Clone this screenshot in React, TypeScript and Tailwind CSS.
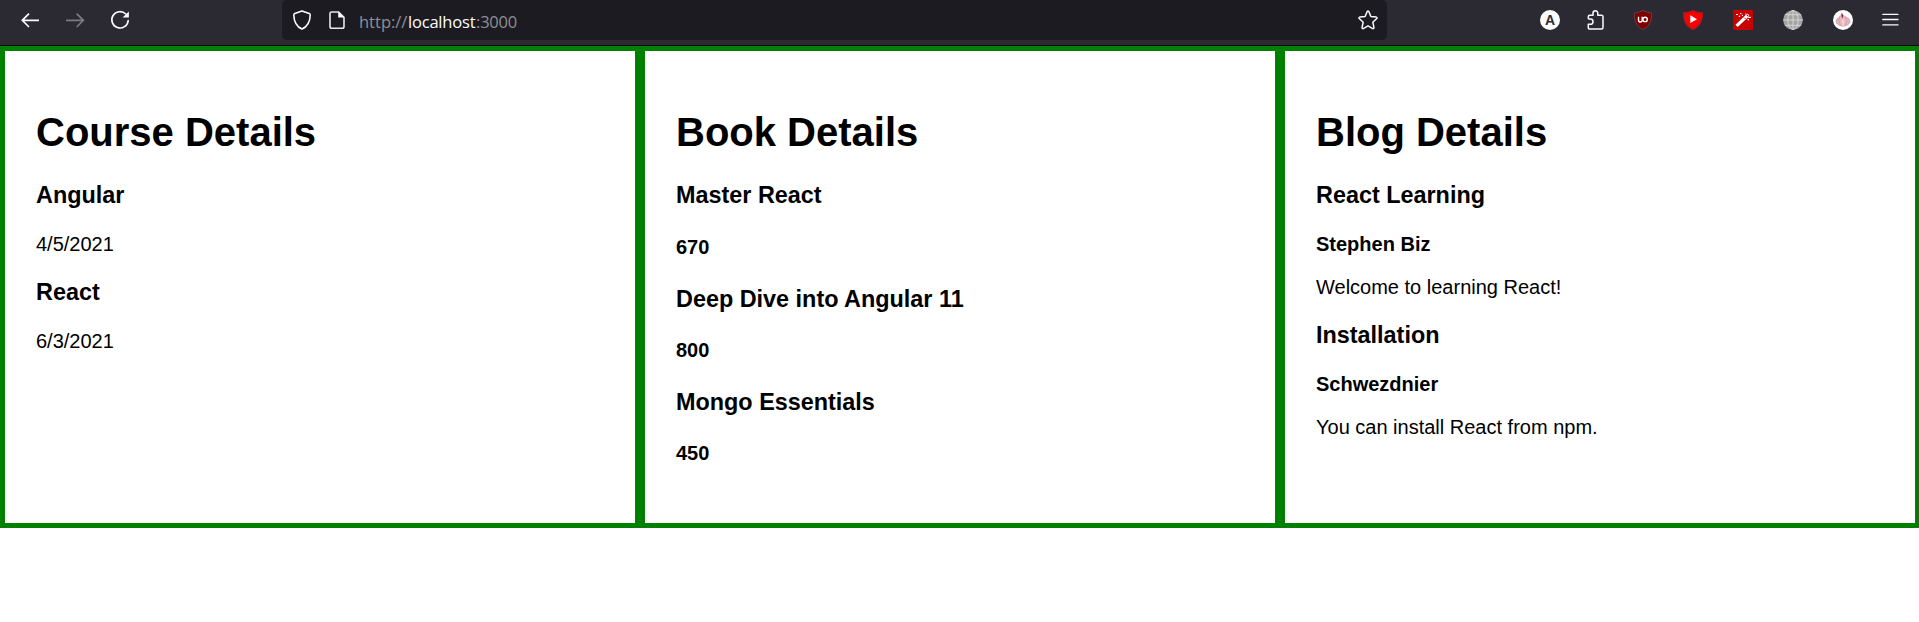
import type { ReactNode } from "react";

function Icon({ children, className = "" }: { children: ReactNode; className?: string }) {
  return (
    <svg viewBox="0 0 20 20" fill="none" className={`block h-5 w-5 shrink-0 ${className}`}>
      {children}
    </svg>
  );
}

function BackIcon() {
  return (
    <Icon>
      <path d="M9 3.6 2.3 10.3 9 17M2.3 10.3H19" stroke="#fbfbfe" strokeWidth="1.7" />
    </Icon>
  );
}

function ForwardIcon() {
  return (
    <Icon className="ml-[25px]">
      <path d="M11.7 3.6 18.4 10.3 11.7 17M18.4 10.3H1" stroke="#7c7b82" strokeWidth="1.7" />
    </Icon>
  );
}

function ReloadIcon() {
  return (
    <Icon className="ml-[25px]">
      <path d="M15.8 4A8.2 8.2 0 1 0 18.2 10.6" stroke="#fbfbfe" strokeWidth="1.6" strokeLinecap="round" />
      <path d="M18.9 1.6V7.6H12.6Z" fill="#fbfbfe" />
    </Icon>
  );
}

function ShieldIcon() {
  return (
    <Icon>
      <path
        d="M10 .9 17.2 3.6Q18.3 4 18.2 5.2C18 11.5 15.5 16.6 10 19.1 4.5 16.6 2 11.5 1.8 5.2Q1.7 4 2.8 3.6Z"
        stroke="#fbfbfe"
        strokeWidth="1.6"
        strokeLinejoin="round"
      />
    </Icon>
  );
}

function PageIcon() {
  return (
    <Icon className="ml-[15px]">
      <path
        d="M4.6 2H11.6L17 7.4V16.4Q17 18.2 15.2 18.2H4.8Q3 18.2 3 16.4V3.6Q3 2 4.6 2Z"
        stroke="#e8e8ec"
        strokeWidth="1.6"
        strokeLinejoin="round"
      />
      <path d="M11.2 1.6V7.4H17.2Z" fill="#fbfbfe" />
    </Icon>
  );
}

function StarIcon() {
  return (
    <Icon>
      <path
        d="M9.2 1.5Q10 .7 10.8 1.5L12.9 6.5 18.3 7.1Q19.5 7.5 18.8 8.5L14.8 12.2 16 17.6Q15.9 18.9 14.7 18.6L10 15.9 5.3 18.6Q4.1 18.9 4 17.6L5.2 12.2 1.2 8.5Q.5 7.5 1.7 7.1L7.1 6.5Z"
        stroke="#fbfbfe"
        strokeWidth="1.5"
        strokeLinejoin="round"
      />
    </Icon>
  );
}

function AccountBadge() {
  return (
    <span className="flex h-5 w-5 shrink-0 items-center justify-center rounded-full bg-[#fbfbfe] font-['Liberation_Sans',sans-serif] text-[14px] leading-none font-bold text-[#2b2a33]">
      A
    </span>
  );
}

function ExtensionsIcon() {
  return (
    <Icon className="ml-[25px]">
      <path
        d="M3.3 8.7V6.8Q3.3 5.3 4.8 5.3H8V3.2A2.4 2.4 0 0 1 12.8 3.2V5.3H16.5Q18 5.3 18 6.8V17.6Q18 19.1 16.5 19.1H4.8Q3.3 19.1 3.3 17.6V14.3H5.4A2.6 2.6 0 0 0 5.4 9.1H3.3"
        stroke="#fbfbfe"
        strokeWidth="1.5"
        strokeLinejoin="round"
      />
    </Icon>
  );
}

function BlockerIcon() {
  return (
    <Icon className="ml-[28px]">
      <path
        d="M10 .4Q14 2.8 18.6 2.9C18.9 11 16.8 16 10 19.6 3.2 16 1.1 11 1.4 2.9Q6 2.8 10 .4Z"
        fill="#800000"
        stroke="#6b4a50"
        strokeWidth=".8"
      />
      <path d="M5.5 6.8V9.9A1.7 1.9 0 0 0 9.2 9.9V6.8" stroke="#fff" strokeWidth="1.4" />
      <circle cx="12.1" cy="9.4" r="2.2" stroke="#fff" strokeWidth="1.4" />
    </Icon>
  );
}

function VideoShieldIcon() {
  return (
    <Icon className="ml-[30px]">
      <path d="M10 0Q15 2.5 20 2.2C20.2 11 17.4 16.5 10 20 2.6 16.5-.2 11 0 2.2Q5 2.5 10 0Z" fill="#c4121b" />
      <path
        d="M10 1.4Q14.3 3.5 18.7 3.3C18.7 10.8 16 15.5 10 18.5 4 15.5 1.3 10.8 1.3 3.3Q5.7 3.5 10 1.4Z"
        fill="#ff0000"
        stroke="#8c2028"
        strokeWidth=".5"
      />
      <path d="M7.3 5.2 14 9.2 7.3 13Z" fill="#fff" />
    </Icon>
  );
}

function WandIcon() {
  return (
    <Icon className="ml-[30px]">
      <rect width="20" height="20" rx=".7" fill="#c80000" />
      <path d="M3.6 15.8 14 6" stroke="#fff" strokeWidth="3.2" />
      <path d="M11.2 7.5 12.7 9" stroke="#c80000" strokeWidth=".8" />
      <path
        d="M3 4.5H5M7 3.5H8.4M5.8 6.4H7.2M8.8 5.4H10M12.2 4H13.3M15.3 7.4H17.8M14.6 9.6H16"
        stroke="#fff"
        strokeWidth="1.2"
      />
      <circle cx="14.5" cy="5.5" r="1.2" stroke="#fff" strokeWidth=".9" />
    </Icon>
  );
}

function GlobeIcon() {
  return (
    <Icon className="ml-[30px]">
      <circle cx="10" cy="10" r="9.8" fill="#a3a3a3" />
      <g stroke="#d9d9d9" strokeWidth=".9">
        <path d="M10 0V20M0 10H20M1.8 4.7H18.2M1.8 15.3H18.2" />
        <ellipse cx="10" cy="10" rx="5.2" ry="9.5" />
      </g>
    </Icon>
  );
}

function OnionIcon() {
  return (
    <Icon className="ml-[30px]">
      <circle cx="10" cy="10" r="10" fill="#fff" />
      <path
        d="M8.8 3.2 10 5.2C12 7.2 16.8 7.5 16.8 11.3 16.8 14.5 13.3 15.6 10 16.2 6.7 15.6 3.2 14.5 3.2 11.3 3.2 7.5 8.5 7.5 8.8 3.2Z"
        fill="#e8bac5"
        stroke="#b88494"
        strokeWidth=".7"
      />
      <path d="M6.8 6.7Q4.7 12 8.2 15M12.5 7.5Q15.5 11.5 12.5 15" stroke="#c98fa1" strokeWidth=".7" />
      <path d="M8.7 3.3Q8.2 6.5 9.2 9L10.2 5.5Z" fill="#8a1238" />
      <path d="M10 9.5V16" stroke="#f5dfad" strokeWidth="1.5" />
    </Icon>
  );
}

function MenuIcon() {
  return (
    <Icon className="ml-[27px]">
      <path d="M2.8 4.3H18M2.8 9.5H18M2.8 14.9H18" stroke="#fbfbfe" strokeWidth="1.3" strokeLinecap="round" />
    </Icon>
  );
}

function BrowserToolbar() {
  return (
    <header className="flex h-[46px] w-[1919px] border-b border-[#0c0c0d] bg-[#2b2a33]">
      <nav className="flex w-[282px] pt-2.5 pl-5">
        <BackIcon />
        <ForwardIcon />
        <ReloadIcon />
      </nav>
      <div className="flex h-10 w-[1105px] justify-between rounded-[5px] bg-[#1c1b22] pt-2.5 pr-[9px] pl-[10px]">
        <div className="flex">
          <ShieldIcon />
          <PageIcon />
          <div className="ml-3 flex h-5 font-['Open_Sans','Noto_Sans',sans-serif] text-[16.5px] leading-[24px] whitespace-nowrap text-[#8f8f96]">
            <span className="w-[49px]">http://</span>
            <span className="w-[68px] tracking-[-0.2px] text-[#fbfbfe]">localhost</span>
            <span className="tracking-[-0.2px]">:3000</span>
          </div>
        </div>
        <StarIcon />
      </div>
      <div className="flex pt-2.5 pl-[153px]">
        <AccountBadge />
        <ExtensionsIcon />
        <BlockerIcon />
        <VideoShieldIcon />
        <WandIcon />
        <GlobeIcon />
        <OnionIcon />
        <MenuIcon />
      </div>
    </header>
  );
}

function Panel({ title, children }: { title: string; children: ReactNode }) {
  return (
    <section className="h-[482px] w-[640px] shrink-0 border-[5px] border-[#008000] pt-[59px] pl-[31px]">
      <h1 className="mb-7 text-[40px] leading-[44px] font-bold">{title}</h1>
      {children}
    </section>
  );
}

function Heading({ children }: { children: ReactNode }) {
  return <h3 className="text-[23.4px] leading-[26px] font-bold">{children}</h3>;
}

const courses = [
  { name: "Angular", date: "4/5/2021" },
  { name: "React", date: "6/3/2021" },
];

const books = [
  { name: "Master React", price: 670 },
  { name: "Deep Dive into Angular 11", price: 800 },
  { name: "Mongo Essentials", price: 450 },
];

const posts = [
  { title: "React Learning", author: "Stephen Biz", text: "Welcome to learning React!" },
  { title: "Installation", author: "Schwezdnier", text: "You can install React from npm." },
];

export default function App() {
  return (
    <div className="h-[622px] w-full overflow-hidden bg-white font-['Liberation_Sans',Arial,sans-serif] text-[20px] leading-[22px] text-black">
      <BrowserToolbar />
      <main className="flex">
        <Panel title="Course Details">
          {courses.map((course) => (
            <div key={course.name} className="mb-6">
              <Heading>{course.name}</Heading>
              <p className="mt-[25px]">{course.date}</p>
            </div>
          ))}
        </Panel>
        <Panel title="Book Details">
          {books.map((book, index) => (
            <div key={book.name} className="mb-7">
              <Heading>{book.name}</Heading>
              <h4 className={index === 0 ? "mt-7 font-bold" : "mt-[27px] font-bold"}>{book.price}</h4>
            </div>
          ))}
        </Panel>
        <Panel title="Blog Details">
          {posts.map((post) => (
            <div key={post.title} className="mb-6">
              <Heading>{post.title}</Heading>
              <h4 className="mt-[25px] font-bold">{post.author}</h4>
              <p className="mt-[21px]">{post.text}</p>
            </div>
          ))}
        </Panel>
      </main>
    </div>
  );
}
